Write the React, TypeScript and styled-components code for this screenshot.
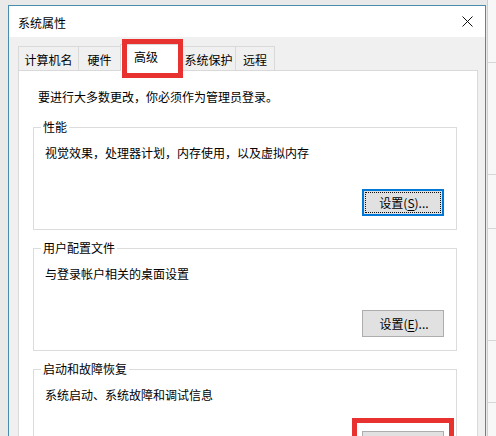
import styled, { createGlobalStyle } from "styled-components";

const GlobalStyle = createGlobalStyle`
  html, body {
    margin: 0;
    padding: 0;
    overflow: hidden;
    background: #e9e9e9;
  }
  body {
    font-family: "Noto Sans CJK SC", "Noto Sans", "Liberation Sans", sans-serif;
    font-size: 12px;
    color: #000;
  }
`;

const tabs = [
  { label: "计算机名", width: 61 },
  { label: "硬件", width: 43 },
  { label: "高级", width: 62, active: true },
  { label: "系统保护", width: 55 },
  { label: "远程", width: 40 },
];

const groups = [
  { title: "性能", desc: "视觉效果，处理器计划，内存使用，以及虚拟内存", key: "S", focused: true },
  { title: "用户配置文件", desc: "与登录帐户相关的桌面设置", key: "E" },
  { title: "启动和故障恢复", desc: "系统启动、系统故障和调试信息", key: "T", marked: true },
];

function App() {
  return (
    <>
      <GlobalStyle />
      <Screen>
        <Window>
          <TitleBar>
            <Title>系统属性</Title>
            <CloseButton>
              <svg width="11" height="11" viewBox="0 0 11 11">
                <path d="M0.5 0.5 L10.5 10.5 M10.5 0.5 L0.5 10.5" stroke="#111" strokeWidth="1" fill="none" />
              </svg>
            </CloseButton>
          </TitleBar>
          <Body>
            <TabStrip>
              {tabs.map((tab) => (
                <Tab key={tab.label} $width={tab.width} $active={!!tab.active}>
                  {tab.label}
                  {tab.active && <Highlight $left={1} $top={-6} $width={61} $height={39} />}
                </Tab>
              ))}
            </TabStrip>
            <Panel>
              <Intro>要进行大多数更改，你必须作为管理员登录。</Intro>
              {groups.map((group) => (
                <Group key={group.title}>
                  <Legend>{group.title}</Legend>
                  <Description>{group.desc}</Description>
                  <ButtonRow>
                    <SettingsButton $focused={!!group.focused}>
                      设置(<u>{group.key}</u>)...
                      {group.marked && <Highlight $left={-11} $top={-14} $width={102} $height={55} />}
                    </SettingsButton>
                  </ButtonRow>
                </Group>
              ))}
            </Panel>
          </Body>
        </Window>
        <BackWindow>
          <BackLine $top={62} />
          <BackLine $top={174} />
          <BackLine $top={228} />
          <BackLine $top={340} />
          <BackLine $top={402} />
        </BackWindow>
      </Screen>
    </>
  );
}

const Screen = styled.div`
  display: flex;
  align-items: flex-start;
  width: 496px;
  height: 436px;
  overflow: hidden;
`;

const Window = styled.div`
  margin: 5px 0 0 8px;
  width: 476px;
  flex-shrink: 0;
  border: 1px solid #4a8cae;
  display: flex;
  flex-direction: column;
  background: #f0f0f0;
`;

const TitleBar = styled.div`
  flex-shrink: 0;
  height: 31px;
  background: #fff;
  display: flex;
  align-items: center;
  justify-content: space-between;
  padding: 0 8px 0 9px;
`;

const Title = styled.div`
  font-size: 12px;
  line-height: 16px;
  margin-top: 2px;
`;

const CloseButton = styled.div`
  width: 20px;
  height: 20px;
  display: flex;
  align-items: center;
  justify-content: center;
  margin-top: -1px;
`;

const Body = styled.div`
  padding: 7px 7px 0 9px;
  display: flex;
  flex-direction: column;
`;

const TabStrip = styled.div`
  display: flex;
  align-items: flex-end;
  height: 26px;
  flex-shrink: 0;
`;

const Tab = styled.div<{ $width: number; $active: boolean }>`
  position: relative;
  box-sizing: border-box;
  width: ${(p) => p.$width}px;
  height: ${(p) => (p.$active ? 27 : 24)}px;
  margin-bottom: ${(p) => (p.$active ? -1 : 0)}px;
  margin-left: -1px;
  &:first-child {
    margin-left: 0;
  }
  z-index: ${(p) => (p.$active ? 2 : 1)};
  background: ${(p) => (p.$active ? "#fff" : "#f0f0f0")};
  border: 1px solid #d9d9d9;
  border-bottom: none;
  display: flex;
  align-items: center;
  justify-content: ${(p) => (p.$active ? "flex-start" : "center")};
  padding: ${(p) => (p.$active ? "0 0 2px 13px" : "2px 0 0")};
  line-height: 16px;
  white-space: nowrap;
`;

const Highlight = styled.div<{ $left: number; $top: number; $width: number; $height: number }>`
  position: absolute;
  left: ${(p) => p.$left}px;
  top: ${(p) => p.$top}px;
  width: ${(p) => p.$width}px;
  height: ${(p) => p.$height}px;
  box-sizing: border-box;
  border: 5px solid #e8322f;
  pointer-events: none;
`;

const Panel = styled.div`
  background: #fff;
  border: 1px solid #d9d9d9;
  padding: 18px 20px 0 14px;
`;

const Intro = styled.div`
  line-height: 16px;
  padding-left: 5px;
  margin-bottom: 14px;
`;

const Group = styled.fieldset`
  margin: 0 0 10px;
  padding: 0 12px 13px 11px;
  border: 1px solid #dcdcdc;
  min-width: 0;
`;

const Legend = styled.legend`
  padding: 0 2px;
  margin-left: -4px;
  line-height: 16px;
`;

const Description = styled.div`
  line-height: 16px;
  margin-top: 10px;
`;

const ButtonRow = styled.div`
  display: flex;
  justify-content: flex-end;
  margin-top: 28px;
`;

const SettingsButton = styled.div<{ $focused: boolean }>`
  position: relative;
  box-sizing: border-box;
  width: 82px;
  height: 27px;
  display: flex;
  align-items: center;
  justify-content: center;
  background: #e1e1e1;
  border: ${(p) => (p.$focused ? "2px solid #0078d7" : "1px solid #adadad")};
  outline: ${(p) => (p.$focused ? "1px dotted #111" : "none")};
  outline-offset: -4px;
  line-height: 16px;
  padding-left: 2px;

  u {
    text-underline-offset: 2px;
  }
`;

const BackWindow = styled.div`
  position: relative;
  flex: 1;
  height: 436px;
  margin-left: 1px;
  background: #f7f7f7;
  border-left: 1px solid #cfcfcf;
`;

const BackLine = styled.div<{ $top: number }>`
  position: absolute;
  left: 0;
  right: 0;
  top: ${(p) => p.$top}px;
  border-top: 1px solid #d6d6d6;
`;

export default App;
